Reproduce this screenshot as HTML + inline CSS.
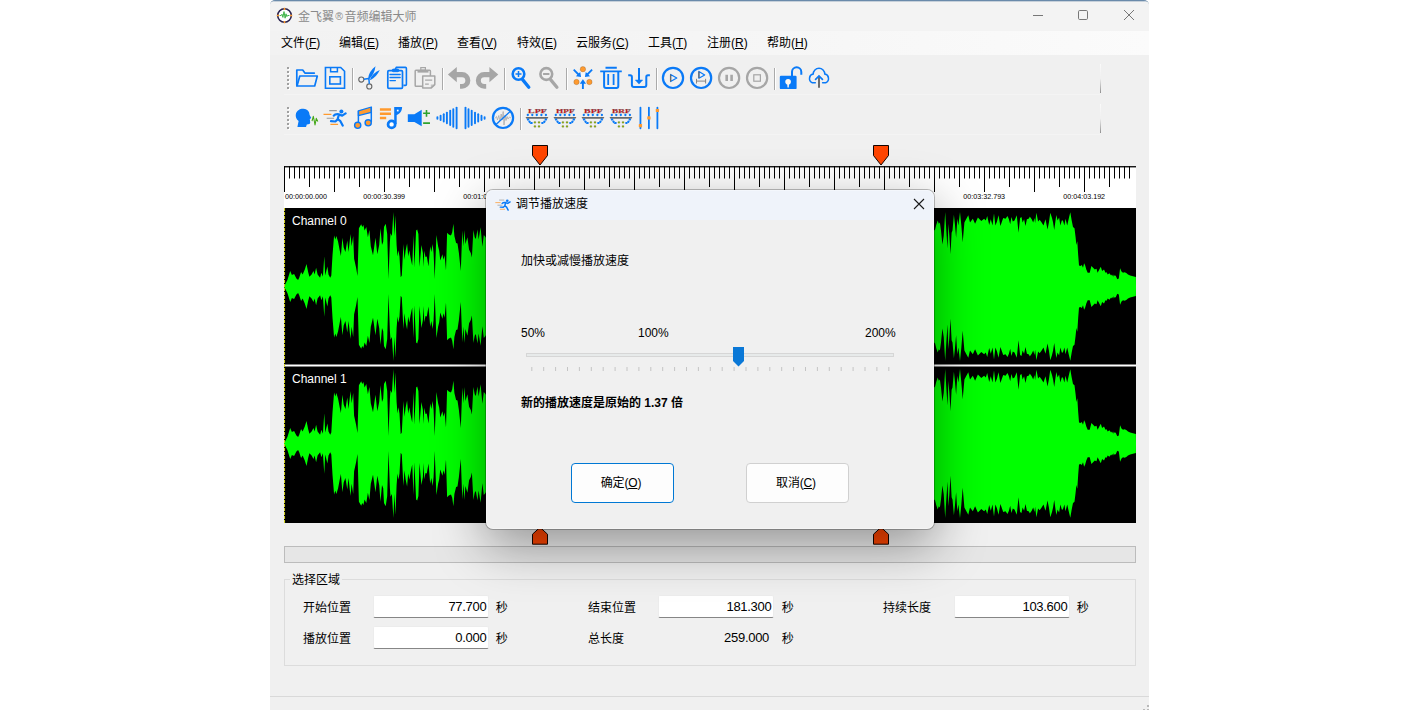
<!DOCTYPE html>
<html lang="zh-CN">
<head>
<meta charset="utf-8">
<title>金飞翼®音频编辑大师</title>
<style>
*{box-sizing:border-box;margin:0;padding:0}
html,body{width:1420px;height:710px;overflow:hidden;background:#fff}
body{position:relative;font-family:"Liberation Sans","Noto Sans CJK SC",sans-serif;font-size:12px;color:#000}
.abs{position:absolute}
#win{position:absolute;left:270px;top:0;width:879px;height:710px;background:#f0f0f0;overflow:hidden;border-top:1px solid #6a8aaa;border-radius:5px 5px 0 0}
#inner{position:absolute;left:0;top:1px;width:879px;height:708px;border-top:0}
#inner>*{position:absolute}
#hl{position:absolute;left:0;top:0;width:879px;height:1px;background:#c6d0da}
#titlebar{left:0;top:0;width:879px;height:29px;background:#f3f3f3}
#title{left:28px;top:6.5px;color:#8a8a8a;font-size:12px;line-height:16px;white-space:nowrap}
#menubar{left:0;top:29px;width:879px;height:24px;background:linear-gradient(to right,#f2f2f2 0%,#f4f4f4 40%,#fbfbfb 100%)}
.mi{position:absolute;top:4px;line-height:16px;font-size:12px;white-space:nowrap}
.t{position:absolute;white-space:nowrap;line-height:16px;font-size:12px}
u{text-decoration:underline;text-underline-offset:1px}
.inp{position:absolute;height:23px;width:116px;letter-spacing:-0.3px;background:#fff;border:1px solid #ececec;border-bottom:1px solid #868686;border-radius:2px;text-align:right;padding-right:1.6px;font-size:13px;line-height:21px}
.sep{position:absolute;width:1px;height:24px;background:#aaaaaa;box-shadow:1px 0 0 #fff}
.grip{position:absolute;width:2px;height:22px;background:repeating-linear-gradient(to bottom,#a0a0a0 0,#a0a0a0 2px,transparent 2px,transparent 4px)}
.grip2{position:absolute;width:2px;height:22px;background:repeating-linear-gradient(to bottom,#fff 0,#fff 2px,transparent 2px,transparent 4px)}
</style>
</head>
<body>
<div id="win"><div id="hl"></div><div id="inner">
  <div id="titlebar"></div>
  <svg class="abs" style="left:6px;top:5px" width="17" height="17" viewBox="0 0 17 17"><circle cx="8.5" cy="8.5" r="6.8" stroke="#2a2350" stroke-width="1.6" fill="#fff"/><path d="M8.5 0.8V3M8.5 14V16.2M0.8 8.5H3M14 8.5H16.2" stroke="#ff9a2e" stroke-width="1.5"/><path d="M3.6 8.5H5.2L6 7.2L6.9 10.4L8 4.6L9.1 11.2L10 6.8L10.9 9.6L11.6 8.5H13.4" stroke="#3fb54a" stroke-width="1" fill="none" stroke-linejoin="round"/></svg>

  <div id="title">金飞翼<span style="font-size:10.5px;margin:0 1.5px 0 1.3px;position:relative;top:-0.5px">®</span>音频编辑大师</div>
  <svg class="abs" style="left:762px;top:7px" width="104" height="14" viewBox="0 0 104 14"><path d="M1 6.5H11" stroke="#777" stroke-width="1"/><rect x="46.5" y="1.5" width="9" height="9" rx="1.2" stroke="#777" stroke-width="1" fill="none"/><path d="M92 1L102 11M102 1L92 11" stroke="#777" stroke-width="1" fill="none"/></svg>

  <div id="menubar">
    <span class="mi" style="left:11px">文件(<u>F</u>)</span>
    <span class="mi" style="left:69px">编辑(<u>E</u>)</span>
    <span class="mi" style="left:128px">播放(<u>P</u>)</span>
    <span class="mi" style="left:187px">查看(<u>V</u>)</span>
    <span class="mi" style="left:247px">特效(<u>E</u>)</span>
    <span class="mi" style="left:306px">云服务(<u>C</u>)</span>
    <span class="mi" style="left:378px">工具(<u>T</u>)</span>
    <span class="mi" style="left:437px">注册(<u>R</u>)</span>
    <span class="mi" style="left:497px">帮助(<u>H</u>)</span>
  </div>
  <div class="abs" style="left:14px;top:92px;width:816px;height:1px;background:#f4f4f4"></div>
  <div class="abs" style="left:14px;top:132px;width:816px;height:1px;background:#f4f4f4"></div>
  <div class="abs" style="left:830px;top:62px;width:1px;height:29px;background:linear-gradient(to bottom,rgba(255,255,255,.7) 0%,rgba(235,235,235,.2) 50%,#909090 100%)"></div>
  <div class="abs" style="left:830px;top:102px;width:1px;height:29px;background:linear-gradient(to bottom,rgba(255,255,255,.7) 0%,rgba(235,235,235,.2) 50%,#909090 100%)"></div>
  <div class="grip2" style="left:18px;top:66px"></div><div class="grip" style="left:17px;top:65px"></div><div class="grip2" style="left:18px;top:106px"></div><div class="grip" style="left:17px;top:105px"></div><svg class="abs" style="left:25px;top:64px" width="24" height="24" viewBox="0 0 24 24"><g transform="translate(-0.9 -0.2)"><path d="M2.7 19.8V4.2H8.6L10.8 7.3H20.2" stroke="#0a7af7" stroke-width="1.7" fill="none" stroke-linejoin="round" stroke-linecap="round"/><path d="M2.9 20.2L5.7 10.2H23.2L20.6 20.2Z" stroke="#0a7af7" stroke-width="1.7" fill="none" stroke-linejoin="round"/></g></svg><svg class="abs" style="left:53px;top:64px" width="24" height="24" viewBox="0 0 24 24"><path d="M2.45 1.45H17.7L21.55 5.3V22.3H2.45Z" stroke="#0a7af7" stroke-width="1.6" fill="none" stroke-linejoin="miter"/><path d="M7.6 1.6V5.7H14.4V1.6" stroke="#0a7af7" stroke-width="1.5" fill="none"/><rect x="6.8" y="10.8" width="10.6" height="7.2" stroke="#0a7af7" stroke-width="1.6" fill="none"/></svg><svg class="abs" style="left:87px;top:64px" width="24" height="24" viewBox="0 0 24 24"><circle cx="4.3" cy="13.5" r="2.55" stroke="#686868" stroke-width="1.15" fill="none"/><circle cx="12.3" cy="20.4" r="2.55" stroke="#686868" stroke-width="1.15" fill="none"/><path d="M6.9 13.2L11.6 12.6M12.3 17.8L11.9 12.6" stroke="#0a7af7" stroke-width="1.5" fill="none"/><path d="M10.9 13.2Q11.6 5.6 18.5 0.3Q17.6 8 12.2 13.2Z" fill="#0a7af7"/><path d="M13 13.6Q15.4 7.2 22.8 4Q19.8 10.6 13.6 14Z" fill="#0a7af7"/></svg><svg class="abs" style="left:115px;top:64px" width="24" height="24" viewBox="0 0 24 24"><path d="M10.2 3.2L11.4 1.4H20.4Q21.4 1.4 21.4 2.4V18.4Q21.4 19.4 20.4 19.4H18.4" stroke="#0a7af7" stroke-width="1.6" fill="none"/><rect x="2.8" y="4.6" width="14.7" height="17.7" rx="1.1" stroke="#0a7af7" stroke-width="1.7" fill="none"/><rect x="7.2" y="3.1" width="6.6" height="2.6" rx="1" stroke="#0a7af7" stroke-width="0.8" fill="#0a7af7"/><path d="M5 8.5H15.2M5 11.5H15.2M5 14.6H10.4" stroke="#0a7af7" stroke-width="1.3" stroke-linecap="round"/></svg><svg class="abs" style="left:143px;top:64px" width="24" height="24" viewBox="0 0 24 24"><rect x="2.2" y="4.2" width="15.2" height="16" rx="0.8" stroke="#a6a6a6" stroke-width="1.5" fill="none"/><rect x="7.8" y="1.6" width="4.6" height="2.6" stroke="#a6a6a6" stroke-width="1.2" fill="none"/><rect x="4.5" y="4.6" width="11" height="2" fill="#a6a6a6"/><path d="M9.7 9.9H21.8V18.6L18 22.1H9.7Z" fill="#f0f0f0" stroke="#a6a6a6" stroke-width="1.5" stroke-linejoin="round"/><path d="M21.6 18.4H17.8V22Z" fill="#a6a6a6" opacity=".6"/><path d="M12.1 14.1H19.2M12.1 18.1H15.8" stroke="#a6a6a6" stroke-width="1.2"/></svg><svg class="abs" style="left:177px;top:64px" width="24" height="24" viewBox="0 0 24 24"><path d="M0.9 8.5L9.8 1.1V6.1H15A8.35 8.35 0 0 1 15 22.8H13V17.9H15A3.35 3.35 0 0 0 15 11.2H9.8V16.2Z" fill="#a6a6a6"/></svg><svg class="abs" style="left:205px;top:64px" width="24" height="24" viewBox="0 0 24 24"><path d="M23.3 8.5L14.4 1.1V6.1H9.2A8.35 8.35 0 0 0 9.2 22.8H11.2V17.9H9.2A3.35 3.35 0 0 1 9.2 11.2H14.4V16.2Z" fill="#a6a6a6"/></svg><svg class="abs" style="left:239px;top:64px" width="24" height="24" viewBox="0 0 24 24"><circle cx="9.5" cy="8" r="5.8" stroke="#0a7af7" stroke-width="2.6" fill="none"/><path d="M13.6 13.6L19.8 21.2" stroke="#0a7af7" stroke-width="3.3" stroke-linecap="round"/><path d="M6.5 8H12.5M9.5 5V11" stroke="#0a7af7" stroke-width="1.5"/></svg><svg class="abs" style="left:267px;top:64px" width="24" height="24" viewBox="0 0 24 24"><circle cx="9.3" cy="8" r="5.9" stroke="#a6a6a6" stroke-width="2.6" fill="none"/><path d="M13.6 13.6L19.9 21.2" stroke="#a6a6a6" stroke-width="3.3" stroke-linecap="round"/><path d="M6.1 8H12.4" stroke="#a6a6a6" stroke-width="2"/></svg><svg class="abs" style="left:301px;top:64px" width="24" height="24" viewBox="0 0 24 24"><path d="M10.5 5.5L13.3 5.5L14.5 12L11.9 13.2L9.3 12Z" fill="#fff" opacity=".5"/><circle cx="11.9" cy="3.2" r="2.7" fill="#ff9a2e" stroke="#7a5a3a" stroke-width="0.3"/><circle cx="5.5" cy="16" r="2.7" fill="#ff9a2e" stroke="#7a5a3a" stroke-width="0.3"/><circle cx="18.4" cy="16" r="2.7" fill="#ff9a2e" stroke="#7a5a3a" stroke-width="0.3"/><path d="M11.9 23V16.5" stroke="#0a7af7" stroke-width="1.9"/><path d="M11.9 13.2L15 17.8H8.8Z" fill="#0a7af7"/><path d="M2.7 3.7L7.5 8.5M21.1 3.7L16.3 8.5" stroke="#0a7af7" stroke-width="1.8"/><path d="M10.1 11.1L4.9 10.2L9.2 5.9ZM13.9 11.1L19.1 10.2L14.8 5.9Z" fill="#0a7af7"/></svg><svg class="abs" style="left:329px;top:64px" width="24" height="24" viewBox="0 0 24 24"><path d="M6.5 1.7H17.8" stroke="#0a7af7" stroke-width="2"/><path d="M1.2 5.3H22.8" stroke="#0a7af7" stroke-width="1.7"/><path d="M5.1 5.6V20Q5.1 21.9 7 21.9H17.4Q19.3 21.9 19.3 20V5.6" stroke="#0a7af7" stroke-width="2" fill="none"/><path d="M9.2 8.1V19M14.6 8.1V19" stroke="#0a7af7" stroke-width="1.8"/></svg><svg class="abs" style="left:357px;top:64px" width="24" height="24" viewBox="0 0 24 24"><path d="M12 2.1V15" stroke="#0a7af7" stroke-width="2"/><path d="M8.3 14L12 18.1L15.7 14Z" fill="#0a7af7" stroke="#0a7af7" stroke-width="0.5" stroke-linejoin="round"/><path d="M1.2 9.2H3.2Q4.9 9.2 4.9 11V19Q4.9 21 6.9 21H17.3Q19.3 21 19.3 19V11Q19.3 9.2 21 9.2H22.9" stroke="#0a7af7" stroke-width="2" fill="none"/></svg><svg class="abs" style="left:391px;top:64px" width="24" height="24" viewBox="0 0 24 24"><circle cx="12" cy="11.9" r="10.1" stroke="#0a7af7" stroke-width="2.2" fill="none"/><path d="M9.6 8.4V15.6L15.8 12Z" stroke="#0a7af7" stroke-width="1.2" fill="none" stroke-linejoin="round"/><path d="M9.6 8.6V15.4" stroke="#6b6b6b" stroke-width="1.3"/></svg><svg class="abs" style="left:419px;top:64px" width="24" height="24" viewBox="0 0 24 24"><circle cx="12.1" cy="11.9" r="10.1" stroke="#0a7af7" stroke-width="2.2" fill="none"/><path d="M9.9 5.4V12.2L15.7 8.9Z" stroke="#0a7af7" stroke-width="1.2" fill="none" stroke-linejoin="round"/><path d="M9.9 5.6V12" stroke="#6b6b6b" stroke-width="1.3"/><path d="M7.5 12.8V17.5M16.6 12.8V17.5M7.5 15.1H16.6" stroke="#7a7a7a" stroke-width="0.9" fill="none"/></svg><svg class="abs" style="left:447px;top:64px" width="24" height="24" viewBox="0 0 24 24"><circle cx="12.1" cy="11.9" r="10.1" stroke="#a6a6a6" stroke-width="2.2" fill="none"/><path d="M9.7 8.8V15M14.6 8.8V15" stroke="#a6a6a6" stroke-width="2.6"/></svg><svg class="abs" style="left:475px;top:64px" width="24" height="24" viewBox="0 0 24 24"><circle cx="12.1" cy="11.9" r="10.1" stroke="#a6a6a6" stroke-width="2.2" fill="none"/><rect x="8.8" y="8.8" width="6.6" height="6.4" stroke="#a6a6a6" stroke-width="1.2" fill="none"/></svg><svg class="abs" style="left:509px;top:64px" width="24" height="24" viewBox="0 0 24 24"><path d="M13 10V6A4.65 4.65 0 0 1 22.3 6V8.8" stroke="#0a7af7" stroke-width="2" fill="none"/><rect x="0.8" y="9.8" width="16.8" height="13.3" rx="1.2" fill="#0a7af7"/><circle cx="9.1" cy="15.7" r="2.8" fill="#fff8f0"/><path d="M8.1 16L8.5 21.6H9.8L10.1 16Z" fill="#fff8f0"/></svg><svg class="abs" style="left:537px;top:64px" width="24" height="24" viewBox="0 0 24 24"><path d="M8.3 16.7H5.3A4.5 4.5 0 0 1 6.2 8.1A5.8 5.8 0 0 1 17.8 8.1A4.5 4.5 0 0 1 18.7 16.7H15.6" stroke="#0a7af7" stroke-width="1.5" fill="none" stroke-linecap="round"/><path d="M12 21.8V11" stroke="#666" stroke-width="1.9"/><path d="M8.1 13.8L12 9.9L15.9 13.8" stroke="#0a7af7" stroke-width="1.7" fill="none"/></svg><div class="sep" style="left:82px;top:66px;height:22px"></div><div class="sep" style="left:172px;top:66px;height:22px"></div><div class="sep" style="left:234px;top:66px;height:22px"></div><div class="sep" style="left:296px;top:66px;height:22px"></div><div class="sep" style="left:386px;top:66px;height:22px"></div><div class="sep" style="left:504px;top:66px;height:22px"></div><svg class="abs" style="left:25px;top:104px" width="24" height="24" viewBox="0 0 24 24"><path d="M2.4 20.9L3.6 15C1 13 0.5 10.5 0.8 8.5C1.5 4.5 5 2.6 8.5 2.8C12.2 3 14.5 5.5 14.6 9L16.3 12L14.8 13L15.2 16.5C15.2 18 14 18.4 11.8 18.4L11 20.9Z" fill="#0a7af7"/><path d="M17 15.2L18.3 10.4L19.4 15.5L20 19L21.3 12.4L22.8 15.6" stroke="#44a818" stroke-width="1.1" fill="none" stroke-linejoin="round"/></svg><svg class="abs" style="left:53px;top:104px" width="24" height="24" viewBox="0 0 24 24"><path d="M6.2 4.6H13.8M3.7 12.3H11.1" stroke="#9a9a9a" stroke-width="1.1"/><path d="M0.5 8.4H8.4M7.4 18.4H15.1" stroke="#ff9a2e" stroke-width="1.1"/><circle cx="18.4" cy="5.6" r="2" fill="#0a7af7"/><path d="M10.8 9.6C12 8 13.5 7.9 16 8.3L14.6 13.4M16.3 8.6L19.2 9.6L22.6 7.4M14.6 13.4L12.4 15.5L8 15.2M14.8 13.2L17.4 15.2L19.7 19.6" stroke="#0a7af7" stroke-width="2.2" stroke-linecap="round" stroke-linejoin="round" fill="none"/></svg><svg class="abs" style="left:81px;top:104px" width="24" height="24" viewBox="0 0 24 24"><path d="M7.4 4.8L20.3 1V6.4L7.4 9.6Z" fill="#ff9a2e" stroke="#0a7af7" stroke-width="1.3" stroke-linejoin="round"/><path d="M7.4 4.8V18M20.3 1V16" stroke="#0a7af7" stroke-width="1.5"/><circle cx="6.7" cy="19.3" r="3.1" fill="#ff9a2e" stroke="#0a7af7" stroke-width="1.4"/><circle cx="17.2" cy="16.8" r="3.1" fill="#ff9a2e" stroke="#0a7af7" stroke-width="1.4"/></svg><svg class="abs" style="left:109px;top:104px" width="24" height="24" viewBox="0 0 24 24"><path d="M0.9 3.5H12M0.9 7.8H12M0.9 11.9H7.2" stroke="#ff9a2e" stroke-width="2.5"/><path d="M15.2 1H23.1C23.1 5 21 8 17.7 8.9V18H15.2Z" fill="#0a7af7"/><rect x="17.9" y="3.7" width="1.7" height="1.7" fill="#fff"/><circle cx="12.6" cy="18.4" r="3.55" stroke="#0a7af7" stroke-width="2.7" fill="#fff"/></svg><svg class="abs" style="left:137px;top:104px" width="24" height="24" viewBox="0 0 24 24"><path d="M0.8 8.3H7.4L14.7 3.8V20.3L7.4 15.9H0.8Z" fill="#0a7af7"/><path d="M16.1 7.3H23M19.5 3.9V10.7M16.1 17.1H23" stroke="#2ea32e" stroke-width="1.6"/></svg><svg class="abs" style="left:165px;top:104px" width="24" height="24" viewBox="0 0 24 24"><path d="M2.4 11.1V12.7" stroke="#0a7af7" stroke-width="1.9" stroke-linecap="round"/><path d="M5.6 9.8V14.0" stroke="#0a7af7" stroke-width="1.9" stroke-linecap="round"/><path d="M8.75 8.2V15.6" stroke="#0a7af7" stroke-width="1.9" stroke-linecap="round"/><path d="M11.9 6.6V17.2" stroke="#0a7af7" stroke-width="1.9" stroke-linecap="round"/><path d="M15.2 4.7V19.1" stroke="#0a7af7" stroke-width="1.9" stroke-linecap="round"/><path d="M18.3 3.1V20.7" stroke="#0a7af7" stroke-width="1.9" stroke-linecap="round"/><path d="M21.6 1.6V22.2" stroke="#0a7af7" stroke-width="1.9" stroke-linecap="round"/></svg><svg class="abs" style="left:193px;top:104px" width="24" height="24" viewBox="0 0 24 24"><path d="M2.5 1.6V22.2" stroke="#0a7af7" stroke-width="1.9" stroke-linecap="round"/><path d="M5.5 3.1V20.7" stroke="#0a7af7" stroke-width="1.9" stroke-linecap="round"/><path d="M8.7 4.7V19.1" stroke="#0a7af7" stroke-width="1.9" stroke-linecap="round"/><path d="M12 6.6V17.2" stroke="#0a7af7" stroke-width="1.9" stroke-linecap="round"/><path d="M15.2 8.2V15.6" stroke="#0a7af7" stroke-width="1.9" stroke-linecap="round"/><path d="M18.5 9.8V14.0" stroke="#0a7af7" stroke-width="1.9" stroke-linecap="round"/><path d="M21.6 11.1V12.7" stroke="#0a7af7" stroke-width="1.9" stroke-linecap="round"/></svg><svg class="abs" style="left:221px;top:104px" width="24" height="24" viewBox="0 0 24 24"><path d="M4 12.5L5.5 10.5L6.5 14L7.8 9.5L9 15L10.2 8L11.2 14L12.2 5.5L13 19L14 9L15 14.5L16 10.5L17 13L18.5 11L20 12" stroke="#a4a4a4" stroke-width="0.7" fill="none" stroke-linejoin="round"/><circle cx="12" cy="11.9" r="10.1" stroke="#0a7af7" stroke-width="2.2" fill="none"/><path d="M5 18.6L19.4 5.2" stroke="#0a7af7" stroke-width="1.3"/></svg><svg class="abs" style="left:255px;top:104px" width="24" height="24" viewBox="0 0 24 24"><text x="12.4" y="7.1" text-anchor="middle" font-family="Liberation Serif, serif" font-weight="bold" font-size="6.2" textLength="18.6" lengthAdjust="spacingAndGlyphs" fill="#e8000a" stroke="#6a6a6a" stroke-width="0.25">LPF</text><circle cx="2.8" cy="9" r="1.15" fill="#0a7af7"/><circle cx="7.3" cy="9" r="1.15" fill="#0a7af7"/><circle cx="11.8" cy="9" r="1.15" fill="#0a7af7"/><circle cx="16.4" cy="9" r="1.15" fill="#0a7af7"/><circle cx="20.9" cy="9" r="1.15" fill="#0a7af7"/><path d="M0.5 10.9H23.4L22.4 12.8H1.5Z" fill="#6a6a6a"/><path d="M2.5 12.6L5.5 17.1H8M21.4 12.6L18.5 17.1H16" stroke="#0a7af7" stroke-width="2" stroke-dasharray="2.1 0.6" fill="none"/><rect x="8.9" y="15.5" width="2" height="1.7" rx="0.4" fill="#8cb400" stroke="#7a7a7a" stroke-width="0.3"/><rect x="8.9" y="19.6" width="2" height="1.7" rx="0.4" fill="#8cb400" stroke="#7a7a7a" stroke-width="0.3"/><rect x="13.0" y="15.5" width="2" height="1.7" rx="0.4" fill="#8cb400" stroke="#7a7a7a" stroke-width="0.3"/><rect x="13.0" y="19.6" width="2" height="1.7" rx="0.4" fill="#8cb400" stroke="#7a7a7a" stroke-width="0.3"/></svg><svg class="abs" style="left:283px;top:104px" width="24" height="24" viewBox="0 0 24 24"><text x="12.4" y="7.1" text-anchor="middle" font-family="Liberation Serif, serif" font-weight="bold" font-size="6.2" textLength="18.6" lengthAdjust="spacingAndGlyphs" fill="#e8000a" stroke="#6a6a6a" stroke-width="0.25">HPF</text><circle cx="2.8" cy="9" r="1.15" fill="#0a7af7"/><circle cx="7.3" cy="9" r="1.15" fill="#0a7af7"/><circle cx="11.8" cy="9" r="1.15" fill="#0a7af7"/><circle cx="16.4" cy="9" r="1.15" fill="#0a7af7"/><circle cx="20.9" cy="9" r="1.15" fill="#0a7af7"/><path d="M0.5 10.9H23.4L22.4 12.8H1.5Z" fill="#6a6a6a"/><path d="M2.5 12.6L5.5 17.1H8M21.4 12.6L18.5 17.1H16" stroke="#0a7af7" stroke-width="2" stroke-dasharray="2.1 0.6" fill="none"/><rect x="8.9" y="15.5" width="2" height="1.7" rx="0.4" fill="#8cb400" stroke="#7a7a7a" stroke-width="0.3"/><rect x="8.9" y="19.6" width="2" height="1.7" rx="0.4" fill="#8cb400" stroke="#7a7a7a" stroke-width="0.3"/><rect x="13.0" y="15.5" width="2" height="1.7" rx="0.4" fill="#8cb400" stroke="#7a7a7a" stroke-width="0.3"/><rect x="13.0" y="19.6" width="2" height="1.7" rx="0.4" fill="#8cb400" stroke="#7a7a7a" stroke-width="0.3"/></svg><svg class="abs" style="left:311px;top:104px" width="24" height="24" viewBox="0 0 24 24"><text x="12.4" y="7.1" text-anchor="middle" font-family="Liberation Serif, serif" font-weight="bold" font-size="6.2" textLength="18.6" lengthAdjust="spacingAndGlyphs" fill="#e8000a" stroke="#6a6a6a" stroke-width="0.25">BPF</text><circle cx="2.8" cy="9" r="1.15" fill="#0a7af7"/><circle cx="7.3" cy="9" r="1.15" fill="#0a7af7"/><circle cx="11.8" cy="9" r="1.15" fill="#0a7af7"/><circle cx="16.4" cy="9" r="1.15" fill="#0a7af7"/><circle cx="20.9" cy="9" r="1.15" fill="#0a7af7"/><path d="M0.5 10.9H23.4L22.4 12.8H1.5Z" fill="#6a6a6a"/><path d="M2.5 12.6L5.5 17.1H8M21.4 12.6L18.5 17.1H16" stroke="#0a7af7" stroke-width="2" stroke-dasharray="2.1 0.6" fill="none"/><rect x="8.9" y="15.5" width="2" height="1.7" rx="0.4" fill="#8cb400" stroke="#7a7a7a" stroke-width="0.3"/><rect x="8.9" y="19.6" width="2" height="1.7" rx="0.4" fill="#8cb400" stroke="#7a7a7a" stroke-width="0.3"/><rect x="13.0" y="15.5" width="2" height="1.7" rx="0.4" fill="#8cb400" stroke="#7a7a7a" stroke-width="0.3"/><rect x="13.0" y="19.6" width="2" height="1.7" rx="0.4" fill="#8cb400" stroke="#7a7a7a" stroke-width="0.3"/></svg><svg class="abs" style="left:339px;top:104px" width="24" height="24" viewBox="0 0 24 24"><text x="12.4" y="7.1" text-anchor="middle" font-family="Liberation Serif, serif" font-weight="bold" font-size="6.2" textLength="18.6" lengthAdjust="spacingAndGlyphs" fill="#e8000a" stroke="#6a6a6a" stroke-width="0.25">BRF</text><circle cx="2.8" cy="9" r="1.15" fill="#0a7af7"/><circle cx="7.3" cy="9" r="1.15" fill="#0a7af7"/><circle cx="11.8" cy="9" r="1.15" fill="#0a7af7"/><circle cx="16.4" cy="9" r="1.15" fill="#0a7af7"/><circle cx="20.9" cy="9" r="1.15" fill="#0a7af7"/><path d="M0.5 10.9H23.4L22.4 12.8H1.5Z" fill="#6a6a6a"/><path d="M2.5 12.6L5.5 17.1H8M21.4 12.6L18.5 17.1H16" stroke="#0a7af7" stroke-width="2" stroke-dasharray="2.1 0.6" fill="none"/><rect x="8.9" y="15.5" width="2" height="1.7" rx="0.4" fill="#8cb400" stroke="#7a7a7a" stroke-width="0.3"/><rect x="8.9" y="19.6" width="2" height="1.7" rx="0.4" fill="#8cb400" stroke="#7a7a7a" stroke-width="0.3"/><rect x="13.0" y="15.5" width="2" height="1.7" rx="0.4" fill="#8cb400" stroke="#7a7a7a" stroke-width="0.3"/><rect x="13.0" y="19.6" width="2" height="1.7" rx="0.4" fill="#8cb400" stroke="#7a7a7a" stroke-width="0.3"/></svg><svg class="abs" style="left:367px;top:104px" width="24" height="24" viewBox="0 0 24 24"><path d="M3.45 1.6V22.3M11.9 1.6V22.3M20.4 1.6V22.3" stroke="#0a7af7" stroke-width="1.8" stroke-linecap="round"/><rect x="1.8" y="18.1" width="3.3" height="3.2" rx="0.6" fill="#ff9a2e"/><rect x="10.25" y="10.3" width="3.3" height="3.2" rx="0.6" fill="#ff9a2e"/><rect x="18.75" y="2.9" width="3.3" height="3.2" rx="0.6" fill="#ff9a2e"/></svg><div class="sep" style="left:250px;top:106px;height:22px"></div>
  <svg class="abs" style="left:14px;top:163px" width="852" height="43" viewBox="0 0 852 43"><rect y="1.2" width="852" height="41.8" fill="#fff"/><rect x="0" y="1.1" width="852" height="1.3" fill="#000"/><path d="M0.5 1.2V27M5.5 1.2V13.5M10.5 1.2V13.5M15.5 1.2V13.5M20.5 1.2V13.5M25.5 1.2V22M30.5 1.2V13.5M35.5 1.2V13.5M40.5 1.2V13.5M45.5 1.2V13.5M50.5 1.2V27M55.5 1.2V13.5M60.5 1.2V13.5M65.5 1.2V13.5M70.5 1.2V13.5M75.5 1.2V22M80.5 1.2V13.5M85.5 1.2V13.5M90.5 1.2V13.5M95.5 1.2V13.5M100.5 1.2V27M105.5 1.2V13.5M110.5 1.2V13.5M115.5 1.2V13.5M120.5 1.2V13.5M125.5 1.2V22M130.5 1.2V13.5M135.5 1.2V13.5M140.5 1.2V13.5M145.5 1.2V13.5M150.5 1.2V27M155.5 1.2V13.5M160.5 1.2V13.5M165.5 1.2V13.5M170.5 1.2V13.5M175.5 1.2V22M180.5 1.2V13.5M185.5 1.2V13.5M190.5 1.2V13.5M195.5 1.2V13.5M200.5 1.2V27M205.5 1.2V13.5M210.5 1.2V13.5M215.5 1.2V13.5M220.5 1.2V13.5M225.5 1.2V22M230.5 1.2V13.5M235.5 1.2V13.5M240.5 1.2V13.5M245.5 1.2V13.5M250.5 1.2V27M255.5 1.2V13.5M260.5 1.2V13.5M265.5 1.2V13.5M270.5 1.2V13.5M275.5 1.2V22M280.5 1.2V13.5M285.5 1.2V13.5M290.5 1.2V13.5M295.5 1.2V13.5M300.5 1.2V27M305.5 1.2V13.5M310.5 1.2V13.5M315.5 1.2V13.5M320.5 1.2V13.5M325.5 1.2V22M330.5 1.2V13.5M335.5 1.2V13.5M340.5 1.2V13.5M345.5 1.2V13.5M350.5 1.2V27M355.5 1.2V13.5M360.5 1.2V13.5M365.5 1.2V13.5M370.5 1.2V13.5M375.5 1.2V22M380.5 1.2V13.5M385.5 1.2V13.5M390.5 1.2V13.5M395.5 1.2V13.5M400.5 1.2V27M405.5 1.2V13.5M410.5 1.2V13.5M415.5 1.2V13.5M420.5 1.2V13.5M425.5 1.2V22M430.5 1.2V13.5M435.5 1.2V13.5M440.5 1.2V13.5M445.5 1.2V13.5M450.5 1.2V27M455.5 1.2V13.5M460.5 1.2V13.5M465.5 1.2V13.5M470.5 1.2V13.5M475.5 1.2V22M480.5 1.2V13.5M485.5 1.2V13.5M490.5 1.2V13.5M495.5 1.2V13.5M500.5 1.2V27M505.5 1.2V13.5M510.5 1.2V13.5M515.5 1.2V13.5M520.5 1.2V13.5M525.5 1.2V22M530.5 1.2V13.5M535.5 1.2V13.5M540.5 1.2V13.5M545.5 1.2V13.5M550.5 1.2V27M555.5 1.2V13.5M560.5 1.2V13.5M565.5 1.2V13.5M570.5 1.2V13.5M575.5 1.2V22M580.5 1.2V13.5M585.5 1.2V13.5M590.5 1.2V13.5M595.5 1.2V13.5M600.5 1.2V27M605.5 1.2V13.5M610.5 1.2V13.5M615.5 1.2V13.5M620.5 1.2V13.5M625.5 1.2V22M630.5 1.2V13.5M635.5 1.2V13.5M640.5 1.2V13.5M645.5 1.2V13.5M650.5 1.2V27M655.5 1.2V13.5M660.5 1.2V13.5M665.5 1.2V13.5M670.5 1.2V13.5M675.5 1.2V22M680.5 1.2V13.5M685.5 1.2V13.5M690.5 1.2V13.5M695.5 1.2V13.5M700.5 1.2V27M705.5 1.2V13.5M710.5 1.2V13.5M715.5 1.2V13.5M720.5 1.2V13.5M725.5 1.2V22M730.5 1.2V13.5M735.5 1.2V13.5M740.5 1.2V13.5M745.5 1.2V13.5M750.5 1.2V27M755.5 1.2V13.5M760.5 1.2V13.5M765.5 1.2V13.5M770.5 1.2V13.5M775.5 1.2V22M780.5 1.2V13.5M785.5 1.2V13.5M790.5 1.2V13.5M795.5 1.2V13.5M800.5 1.2V27M805.5 1.2V13.5M810.5 1.2V13.5M815.5 1.2V13.5M820.5 1.2V13.5M825.5 1.2V22M830.5 1.2V13.5M835.5 1.2V13.5M840.5 1.2V13.5M845.5 1.2V13.5" stroke="#000" stroke-width="1" fill="none"/><text x="1.1" y="33.9" textLength="41.8" lengthAdjust="spacingAndGlyphs" font-family="Liberation Sans, sans-serif" font-size="7.8" fill="#000">00:00:00.000</text><text x="79.3" y="33.9" textLength="41.8" lengthAdjust="spacingAndGlyphs" font-family="Liberation Sans, sans-serif" font-size="7.8" fill="#000">00:00:30.399</text><text x="179.3" y="33.9" textLength="41.8" lengthAdjust="spacingAndGlyphs" font-family="Liberation Sans, sans-serif" font-size="7.8" fill="#000">00:01:00.799</text><text x="279.3" y="33.9" textLength="41.8" lengthAdjust="spacingAndGlyphs" font-family="Liberation Sans, sans-serif" font-size="7.8" fill="#000">00:01:31.198</text><text x="379.3" y="33.9" textLength="41.8" lengthAdjust="spacingAndGlyphs" font-family="Liberation Sans, sans-serif" font-size="7.8" fill="#000">00:02:01.598</text><text x="479.3" y="33.9" textLength="41.8" lengthAdjust="spacingAndGlyphs" font-family="Liberation Sans, sans-serif" font-size="7.8" fill="#000">00:02:31.997</text><text x="579.3" y="33.9" textLength="41.8" lengthAdjust="spacingAndGlyphs" font-family="Liberation Sans, sans-serif" font-size="7.8" fill="#000">00:03:02.396</text><text x="679.3" y="33.9" textLength="41.8" lengthAdjust="spacingAndGlyphs" font-family="Liberation Sans, sans-serif" font-size="7.8" fill="#000">00:03:32.793</text><text x="779.3" y="33.9" textLength="41.8" lengthAdjust="spacingAndGlyphs" font-family="Liberation Sans, sans-serif" font-size="7.8" fill="#000">00:04:03.192</text></svg>
  <svg class="abs" style="left:14px;top:206px" width="852" height="315" viewBox="0 0 852 315"><rect width="852" height="315" fill="#000"/><path d="M0 78.5 L0.0 77.9 L1.1 76.6 L3.4 72.1 L6.2 63.1 L7.9 67.0 L10.1 65.9 L12.4 70.4 L14.1 72.1 L15.2 69.8 L17.1 64.0 L18.6 66.4 L20.8 61.4 L22.5 56.0 L24.2 64.2 L25.4 68.7 L27.6 66.4 L29.5 63.1 L30.6 66.4 L32.1 59.7 L33.6 66.4 L36.1 69.8 L37.4 64.8 L38.9 68.7 L40.3 48.2 L41.2 67.6 L43.4 58.6 L44.5 66.4 L46.2 69.8 L47.3 67.6 L48.5 47.3 L50.1 27.6 L51.3 31.5 L52.4 28.1 L54.1 33.8 L55.8 42.8 L56.9 47.9 L58.4 29.8 L59.7 39.4 L61.4 43.9 L63.3 32.6 L64.5 43.9 L66.5 26.1 L67.6 38.3 L69.2 28.1 L70.1 50.7 L72.1 59.7 L73.5 68.1 L74.9 20.2 L77.2 16.3 L78.3 19.1 L79.4 16.9 L80.6 22.5 L82.3 18.9 L83.9 29.3 L85.4 21.9 L86.8 38.3 L89.0 47.3 L91.5 29.8 L93.3 46.2 L95.2 37.1 L96.5 20.2 L98.0 37.1 L99.2 33.8 L100.0 19.1 L101.7 15.7 L103.2 25.9 L104.5 71.0 L105.9 33.8 L106.5 25.3 L107.9 28.1 L109.4 3.9 L110.4 28.1 L111.5 7.3 L112.6 37.1 L113.5 48.4 L114.4 42.2 L115.5 48.4 L116.7 69.3 L117.8 67.6 L119.4 36.0 L120.5 51.8 L121.6 42.8 L123.1 35.5 L124.2 48.4 L125.4 42.2 L126.5 49.5 L128.2 57.4 L129.5 27.0 L130.4 59.7 L132.1 22.5 L133.2 21.4 L134.4 25.9 L135.5 59.1 L137.4 37.1 L138.9 45.0 L139.4 59.1 L140.3 42.8 L141.5 49.0 L142.8 48.4 L144.5 58.6 L146.2 38.3 L147.3 43.9 L148.7 36.0 L149.6 45.0 L150.7 71.0 L152.4 27.0 L154.1 38.3 L155.2 42.8 L156.3 52.4 L158.4 46.2 L159.5 51.8 L160.6 47.3 L162.0 62.5 L163.1 24.8 L164.8 26.4 L167.0 27.6 L168.2 24.2 L169.4 15.7 L170.4 28.1 L172.1 34.9 L173.5 35.5 L174.9 45.0 L176.8 63.1 L178.3 22.5 L179.4 38.3 L180.5 21.9 L181.4 36.0 L183.4 29.3 L185.1 41.7 L186.8 45.0 L187.9 49.5 L189.4 21.9 L190.7 29.3 L191.8 31.0 L193.5 21.4 L194.6 31.5 L196.6 19.3 L198.4 38.8 L199.8 27.0 L201.7 29.3 L203.1 33.8 L208.0 27.0 L210.9 34.8 L213.4 16.7 L216.7 39.7 L218.6 42.0 L221.0 42.6 L223.4 24.0 L225.5 23.2 L228.2 42.8 L230.8 35.7 L233.1 35.0 L236.0 30.3 L237.8 27.2 L240.9 34.3 L242.8 31.9 L246.2 14.2 L249.0 16.4 L252.2 32.2 L253.9 23.9 L256.5 32.7 L258.5 31.3 L260.9 35.4 L263.0 29.8 L266.2 25.9 L268.3 35.2 L270.7 37.3 L272.6 28.1 L274.3 29.0 L276.5 22.3 L279.5 22.8 L282.4 32.3 L285.2 33.3 L287.9 33.7 L290.3 41.7 L292.2 14.4 L294.2 22.8 L297.0 21.8 L299.5 25.6 L301.1 41.3 L303.0 38.9 L304.7 39.6 L307.3 37.9 L310.7 23.1 L313.3 22.3 L315.3 15.7 L318.5 21.7 L320.9 18.2 L323.9 23.7 L327.3 24.5 L329.5 26.9 L331.4 37.7 L334.3 20.0 L337.8 18.0 L340.4 40.8 L342.8 15.7 L345.9 28.9 L348.3 37.0 L350.2 41.3 L353.5 24.3 L355.3 31.1 L356.9 37.2 L359.8 24.0 L362.3 35.3 L365.1 14.8 L367.5 41.4 L369.1 41.0 L372.5 27.3 L375.7 38.4 L377.7 22.7 L381.0 33.3 L382.6 17.6 L384.7 21.3 L386.5 22.7 L389.7 21.7 L391.9 21.7 L393.7 34.1 L396.0 17.2 L397.8 17.1 L400.9 14.4 L403.2 37.4 L405.1 18.7 L408.6 22.5 L411.0 34.9 L414.2 17.3 L415.9 37.0 L419.1 18.1 L421.2 35.1 L423.5 27.3 L425.2 18.4 L427.8 20.3 L429.8 14.5 L432.8 33.2 L436.2 22.5 L439.3 42.1 L441.0 21.2 L443.1 28.0 L444.9 14.2 L447.4 18.6 L449.0 29.1 L450.7 17.0 L453.0 41.4 L454.7 27.3 L456.4 38.0 L458.7 28.6 L461.4 24.9 L463.6 24.9 L465.5 35.2 L468.5 38.9 L470.5 36.2 L473.0 43.5 L474.5 29.7 L476.3 23.1 L479.4 26.2 L482.3 31.8 L483.9 30.3 L486.2 25.6 L487.9 36.7 L491.1 35.6 L493.4 15.4 L495.4 39.1 L498.3 26.5 L501.1 42.2 L503.4 43.4 L505.4 22.3 L507.0 34.7 L510.5 14.4 L512.9 21.4 L515.7 29.5 L518.9 38.3 L522.1 42.2 L525.3 23.2 L527.7 23.4 L530.1 20.1 L531.9 28.3 L535.1 15.7 L537.0 35.9 L540.3 33.1 L542.0 22.1 L544.3 21.4 L546.7 28.5 L549.1 34.8 L552.4 23.4 L555.5 16.6 L557.5 15.9 L560.7 28.3 L563.3 40.1 L566.3 38.3 L568.9 39.7 L570.6 25.2 L573.0 23.3 L576.1 14.0 L577.8 24.6 L580.4 24.0 L583.0 26.8 L586.3 29.9 L588.8 22.8 L590.5 30.5 L592.2 39.4 L593.7 37.2 L595.7 28.0 L598.3 18.8 L600.8 16.8 L603.1 21.2 L605.7 24.8 L607.7 15.4 L610.7 39.1 L613.3 13.6 L614.9 34.4 L617.9 42.3 L620.9 26.3 L623.9 27.0 L627.2 33.1 L629.9 42.0 L632.5 30.9 L636.0 15.1 L637.7 42.3 L639.5 37.7 L642.4 27.2 L646.0 20.2 L648.3 18.0 L650.2 22.5 L651.1 21.4 L652.2 16.9 L653.7 12.4 L654.8 15.7 L655.9 14.6 L657.0 22.5 L658.4 36.6 L659.7 28.1 L661.2 3.9 L662.3 22.5 L663.5 40.5 L664.4 15.7 L665.4 28.1 L666.5 46.2 L667.6 24.8 L668.5 22.5 L669.9 6.7 L671.0 16.9 L672.1 29.8 L673.3 10.7 L674.4 17.4 L676.0 3.9 L677.3 16.9 L678.7 34.3 L680.4 14.6 L682.1 11.2 L684.3 7.3 L686.0 14.6 L688.8 10.7 L691.1 15.7 L693.9 9.5 L697.3 12.9 L700.1 10.7 L701.8 12.4 L703.2 7.9 L705.2 16.9 L706.8 11.2 L708.5 17.4 L710.0 5.6 L711.4 17.4 L713.0 13.5 L714.5 7.3 L716.4 18.0 L719.2 10.1 L721.5 10.7 L723.5 7.9 L724.9 11.2 L726.2 16.3 L727.4 9.0 L728.8 13.5 L730.5 12.4 L732.8 7.3 L734.5 24.8 L736.1 10.1 L737.5 9.0 L738.6 14.6 L740.1 11.2 L741.5 18.0 L742.9 11.2 L744.6 10.7 L746.0 8.4 L746.1 9.0 L747.7 11.2 L749.2 14.6 L750.5 10.1 L751.1 15.2 L752.4 4.7 L754.1 13.5 L755.6 11.8 L757.3 14.0 L759.5 17.4 L761.5 11.2 L763.5 21.4 L764.9 14.6 L766.3 4.7 L768.0 10.1 L769.1 14.6 L770.2 21.9 L772.3 7.0 L773.6 12.4 L775.1 9.5 L776.4 17.4 L777.8 12.4 L778.9 12.4 L780.4 17.4 L781.5 10.7 L783.2 17.4 L784.9 10.1 L786.3 4.2 L787.7 12.4 L789.0 19.1 L790.5 20.2 L791.6 29.3 L792.4 37.1 L793.3 33.2 L794.2 47.3 L795.0 57.4 L796.5 58.0 L797.8 56.9 L799.0 59.7 L800.1 55.2 L801.2 57.4 L802.3 61.4 L803.7 64.8 L805.7 64.8 L807.4 58.0 L809.1 59.7 L810.8 61.4 L812.5 60.8 L813.6 64.8 L815.3 61.4 L816.8 58.8 L818.1 63.1 L820.0 61.4 L821.5 64.8 L822.6 64.2 L823.7 66.4 L825.4 65.3 L827.1 67.6 L828.0 66.4 L829.2 68.7 L829.9 66.4 L830.7 68.1 L831.6 67.6 L833.3 71.2 L834.8 70.4 L836.1 60.2 L837.5 63.6 L839.0 64.8 L840.6 64.2 L842.3 65.1 L844.0 66.4 L846.1 67.6 L851.9 68.9 L852 78.5 L851.9 88.1 L846.1 89.4 L844.0 90.6 L842.3 91.9 L840.6 92.8 L839.0 92.2 L837.5 93.4 L836.1 96.8 L834.8 86.6 L833.3 85.8 L831.6 89.4 L830.7 88.9 L829.9 90.6 L829.2 88.3 L828.0 90.6 L827.1 89.4 L825.4 91.7 L823.7 90.6 L822.6 92.8 L821.5 92.2 L820.0 95.6 L818.1 93.9 L816.8 98.2 L815.3 95.6 L813.6 92.2 L812.5 96.2 L810.8 95.6 L809.1 97.3 L807.4 99.0 L805.7 92.2 L803.7 92.2 L802.3 95.6 L801.2 99.6 L800.1 101.8 L799.0 97.3 L797.8 100.1 L796.5 99.0 L795.0 99.6 L794.2 109.7 L793.3 123.8 L792.4 119.9 L791.6 127.7 L790.5 136.8 L789.0 137.9 L787.7 144.6 L786.3 152.8 L784.9 146.9 L783.2 139.6 L781.5 146.3 L780.4 139.6 L778.9 144.6 L777.8 144.6 L776.4 139.6 L775.1 147.5 L773.6 144.6 L772.3 150.0 L770.2 135.1 L769.1 142.4 L768.0 146.9 L766.3 152.3 L764.9 142.4 L763.5 135.6 L761.5 145.8 L759.5 139.6 L757.3 143.0 L755.6 145.2 L754.1 143.5 L752.4 152.3 L751.1 141.8 L750.5 146.9 L749.2 142.4 L747.7 145.8 L746.1 148.0 L746.0 148.6 L744.6 146.3 L742.9 145.8 L741.5 139.0 L740.1 145.8 L738.6 142.4 L737.5 148.0 L736.1 146.9 L734.5 132.2 L732.8 149.7 L730.5 144.6 L728.8 143.5 L727.4 148.0 L726.2 140.7 L724.9 145.8 L723.5 149.1 L721.5 146.3 L719.2 146.9 L716.4 139.0 L714.5 149.7 L713.0 143.5 L711.4 139.6 L710.0 151.4 L708.5 139.6 L706.8 145.8 L705.2 140.1 L703.2 149.1 L701.8 144.6 L700.1 146.3 L697.3 144.1 L693.9 147.5 L691.1 141.3 L688.8 146.3 L686.0 142.4 L684.3 149.7 L682.1 145.8 L680.4 142.4 L678.7 122.7 L677.3 140.1 L676.0 153.1 L674.4 139.6 L673.3 146.3 L672.1 127.2 L671.0 140.1 L669.9 150.3 L668.5 134.5 L667.6 132.2 L666.5 110.8 L665.4 128.9 L664.4 141.3 L663.5 116.5 L662.3 134.5 L661.2 153.1 L659.7 128.9 L658.4 120.4 L657.0 134.5 L655.9 142.4 L654.8 141.3 L653.7 144.6 L652.2 140.1 L651.1 135.6 L650.2 134.5 L648.3 139.0 L646.0 136.8 L642.4 129.8 L639.5 119.3 L637.7 114.7 L636.0 141.9 L632.5 126.1 L629.9 115.0 L627.2 123.9 L623.9 130.0 L620.9 130.7 L617.9 114.7 L614.9 122.6 L613.3 143.4 L610.7 117.9 L607.7 141.6 L605.7 132.2 L603.1 135.8 L600.8 140.2 L598.3 138.2 L595.7 129.0 L593.7 119.8 L592.2 117.6 L590.5 126.5 L588.8 134.2 L586.3 127.1 L583.0 130.2 L580.4 133.0 L577.8 132.4 L576.1 143.0 L573.0 133.7 L570.6 131.8 L568.9 117.3 L566.3 118.7 L563.3 116.9 L560.7 128.7 L557.5 141.1 L555.5 140.4 L552.4 133.6 L549.1 122.2 L546.7 128.5 L544.3 135.6 L542.0 134.9 L540.3 123.9 L537.0 121.1 L535.1 141.3 L531.9 128.7 L530.1 136.9 L527.7 133.6 L525.3 133.8 L522.1 114.8 L518.9 118.7 L515.7 127.5 L512.9 135.6 L510.5 142.6 L507.0 122.3 L505.4 134.7 L503.4 113.6 L501.1 114.8 L498.3 130.5 L495.4 117.9 L493.4 141.6 L491.1 121.4 L487.9 120.3 L486.2 131.4 L483.9 126.7 L482.3 125.2 L479.4 130.8 L476.3 133.9 L474.5 127.3 L473.0 113.5 L470.5 120.8 L468.5 118.1 L465.5 121.8 L463.6 132.1 L461.4 132.1 L458.7 128.4 L456.4 119.0 L454.7 129.7 L453.0 115.6 L450.7 140.0 L449.0 127.9 L447.4 138.4 L444.9 142.8 L443.1 129.0 L441.0 135.8 L439.3 114.9 L436.2 134.5 L432.8 123.8 L429.8 142.5 L427.8 136.7 L425.2 138.6 L423.5 129.7 L421.2 121.9 L419.1 138.9 L415.9 120.0 L414.2 139.7 L411.0 122.1 L408.6 134.5 L405.1 138.3 L403.2 119.6 L400.9 142.6 L397.8 139.9 L396.0 139.8 L393.7 122.9 L391.9 135.3 L389.7 135.3 L386.5 134.3 L384.7 135.7 L382.6 139.4 L381.0 123.7 L377.7 134.3 L375.7 118.6 L372.5 129.7 L369.1 116.0 L367.5 115.6 L365.1 142.2 L362.3 121.7 L359.8 133.0 L356.9 119.8 L355.3 125.9 L353.5 132.7 L350.2 115.7 L348.3 120.0 L345.9 128.1 L342.8 141.3 L340.4 116.2 L337.8 139.0 L334.3 137.0 L331.4 119.3 L329.5 130.1 L327.3 132.5 L323.9 133.3 L320.9 138.8 L318.5 135.3 L315.3 141.3 L313.3 134.7 L310.7 133.9 L307.3 119.1 L304.7 117.4 L303.0 118.1 L301.1 115.7 L299.5 131.4 L297.0 135.2 L294.2 134.2 L292.2 142.6 L290.3 115.3 L287.9 123.3 L285.2 123.7 L282.4 124.7 L279.5 134.2 L276.5 134.7 L274.3 128.0 L272.6 128.9 L270.7 119.7 L268.3 121.8 L266.2 131.1 L263.0 127.2 L260.9 121.6 L258.5 125.7 L256.5 124.3 L253.9 133.1 L252.2 124.8 L249.0 140.6 L246.2 142.8 L242.8 125.1 L240.9 122.7 L237.8 129.8 L236.0 126.7 L233.1 122.0 L230.8 121.3 L228.2 114.2 L225.5 133.8 L223.4 133.0 L221.0 114.4 L218.6 115.0 L216.7 117.3 L213.4 140.3 L210.9 122.2 L208.0 130.0 L203.1 123.2 L201.7 127.7 L199.8 130.0 L198.4 118.2 L196.6 137.7 L194.6 125.5 L193.5 135.6 L191.8 126.0 L190.7 127.7 L189.4 135.1 L187.9 107.5 L186.8 112.0 L185.1 115.3 L183.4 127.7 L181.4 121.0 L180.5 135.1 L179.4 118.7 L178.3 134.5 L176.8 93.9 L174.9 112.0 L173.5 121.5 L172.1 122.1 L170.4 128.9 L169.4 141.3 L168.2 132.8 L167.0 129.4 L164.8 130.6 L163.1 132.2 L162.0 94.5 L160.6 109.7 L159.5 105.2 L158.4 110.8 L156.3 104.6 L155.2 114.2 L154.1 118.7 L152.4 130.0 L150.7 86.0 L149.6 112.0 L148.7 121.0 L147.3 113.1 L146.2 118.7 L144.5 98.4 L142.8 108.6 L141.5 108.0 L140.3 114.2 L139.4 97.9 L138.9 112.0 L137.4 119.9 L135.5 97.9 L134.4 131.1 L133.2 135.6 L132.1 134.5 L130.4 97.3 L129.5 130.0 L128.2 99.6 L126.5 107.5 L125.4 114.8 L124.2 108.6 L123.1 121.5 L121.6 114.2 L120.5 105.2 L119.4 121.0 L117.8 89.4 L116.7 87.7 L115.5 108.6 L114.4 114.8 L113.5 108.6 L112.6 119.9 L111.5 149.7 L110.4 128.9 L109.4 153.1 L107.9 128.9 L106.5 131.7 L105.9 123.2 L104.5 86.0 L103.2 131.1 L101.7 141.3 L100.0 137.9 L99.2 123.2 L98.0 119.9 L96.5 136.8 L95.2 119.9 L93.3 110.8 L91.5 127.2 L89.0 109.7 L86.8 118.7 L85.4 135.1 L83.9 127.7 L82.3 138.1 L80.6 134.5 L79.4 140.1 L78.3 137.9 L77.2 140.7 L74.9 136.8 L73.5 88.9 L72.1 97.3 L70.1 106.3 L69.2 128.9 L67.6 118.7 L66.5 130.9 L64.5 113.1 L63.3 124.4 L61.4 113.1 L59.7 117.6 L58.4 127.2 L56.9 109.1 L55.8 114.2 L54.1 123.2 L52.4 128.9 L51.3 125.5 L50.1 129.4 L48.5 109.7 L47.3 89.4 L46.2 87.2 L44.5 90.6 L43.4 98.4 L41.2 89.4 L40.3 108.8 L38.9 88.3 L37.4 92.2 L36.1 87.2 L33.6 90.6 L32.1 97.3 L30.6 90.6 L29.5 93.9 L27.6 90.6 L25.4 88.3 L24.2 92.8 L22.5 101.0 L20.8 95.6 L18.6 90.6 L17.1 93.0 L15.2 87.2 L14.1 84.9 L12.4 86.6 L10.1 91.1 L7.9 90.0 L6.2 93.9 L3.4 84.9 L1.1 80.4 L0.0 79.1 Z" fill="#00ff00"/><path d="M0 235.5 L0.0 234.9 L1.1 233.6 L3.4 229.1 L6.2 220.1 L7.9 224.0 L10.1 222.9 L12.4 227.4 L14.1 229.1 L15.2 226.8 L17.1 221.0 L18.6 223.4 L20.8 218.4 L22.5 213.0 L24.2 221.2 L25.4 225.7 L27.6 223.4 L29.5 220.1 L30.6 223.4 L32.1 216.7 L33.6 223.4 L36.1 226.8 L37.4 221.8 L38.9 225.7 L40.3 205.2 L41.2 224.6 L43.4 215.6 L44.5 223.4 L46.2 226.8 L47.3 224.6 L48.5 204.3 L50.1 184.6 L51.3 188.5 L52.4 185.1 L54.1 190.8 L55.8 199.8 L56.9 204.9 L58.4 186.8 L59.7 196.4 L61.4 200.9 L63.3 189.6 L64.5 200.9 L66.5 183.1 L67.6 195.3 L69.2 185.1 L70.1 207.7 L72.1 216.7 L73.5 225.1 L74.9 177.2 L77.2 173.3 L78.3 176.1 L79.4 173.9 L80.6 179.5 L82.3 175.9 L83.9 186.3 L85.4 178.9 L86.8 195.3 L89.0 204.3 L91.5 186.8 L93.3 203.2 L95.2 194.1 L96.5 177.2 L98.0 194.1 L99.2 190.8 L100.0 176.1 L101.7 172.7 L103.2 182.9 L104.5 228.0 L105.9 190.8 L106.5 182.3 L107.9 185.1 L109.4 160.9 L110.4 185.1 L111.5 164.3 L112.6 194.1 L113.5 205.4 L114.4 199.2 L115.5 205.4 L116.7 226.3 L117.8 224.6 L119.4 193.0 L120.5 208.8 L121.6 199.8 L123.1 192.5 L124.2 205.4 L125.4 199.2 L126.5 206.5 L128.2 214.4 L129.5 184.0 L130.4 216.7 L132.1 179.5 L133.2 178.4 L134.4 182.9 L135.5 216.1 L137.4 194.1 L138.9 202.0 L139.4 216.1 L140.3 199.8 L141.5 206.0 L142.8 205.4 L144.5 215.6 L146.2 195.3 L147.3 200.9 L148.7 193.0 L149.6 202.0 L150.7 228.0 L152.4 184.0 L154.1 195.3 L155.2 199.8 L156.3 209.4 L158.4 203.2 L159.5 208.8 L160.6 204.3 L162.0 219.5 L163.1 181.8 L164.8 183.4 L167.0 184.6 L168.2 181.2 L169.4 172.7 L170.4 185.1 L172.1 191.9 L173.5 192.5 L174.9 202.0 L176.8 220.1 L178.3 179.5 L179.4 195.3 L180.5 178.9 L181.4 193.0 L183.4 186.3 L185.1 198.7 L186.8 202.0 L187.9 206.5 L189.4 178.9 L190.7 186.3 L191.8 188.0 L193.5 178.4 L194.6 188.5 L196.6 176.3 L198.4 195.8 L199.8 184.0 L201.7 186.3 L203.1 190.8 L208.0 184.0 L210.9 191.8 L213.4 173.7 L216.7 196.7 L218.6 199.0 L221.0 199.6 L223.4 181.0 L225.5 180.2 L228.2 199.8 L230.8 192.7 L233.1 192.0 L236.0 187.3 L237.8 184.2 L240.9 191.3 L242.8 188.9 L246.2 171.2 L249.0 173.4 L252.2 189.2 L253.9 180.9 L256.5 189.7 L258.5 188.3 L260.9 192.4 L263.0 186.8 L266.2 182.9 L268.3 192.2 L270.7 194.3 L272.6 185.1 L274.3 186.0 L276.5 179.3 L279.5 179.8 L282.4 189.3 L285.2 190.3 L287.9 190.7 L290.3 198.7 L292.2 171.4 L294.2 179.8 L297.0 178.8 L299.5 182.6 L301.1 198.3 L303.0 195.9 L304.7 196.6 L307.3 194.9 L310.7 180.1 L313.3 179.3 L315.3 172.7 L318.5 178.7 L320.9 175.2 L323.9 180.7 L327.3 181.5 L329.5 183.9 L331.4 194.7 L334.3 177.0 L337.8 175.0 L340.4 197.8 L342.8 172.7 L345.9 185.9 L348.3 194.0 L350.2 198.3 L353.5 181.3 L355.3 188.1 L356.9 194.2 L359.8 181.0 L362.3 192.3 L365.1 171.8 L367.5 198.4 L369.1 198.0 L372.5 184.3 L375.7 195.4 L377.7 179.7 L381.0 190.3 L382.6 174.6 L384.7 178.3 L386.5 179.7 L389.7 178.7 L391.9 178.7 L393.7 191.1 L396.0 174.2 L397.8 174.1 L400.9 171.4 L403.2 194.4 L405.1 175.7 L408.6 179.5 L411.0 191.9 L414.2 174.3 L415.9 194.0 L419.1 175.1 L421.2 192.1 L423.5 184.3 L425.2 175.4 L427.8 177.3 L429.8 171.5 L432.8 190.2 L436.2 179.5 L439.3 199.1 L441.0 178.2 L443.1 185.0 L444.9 171.2 L447.4 175.6 L449.0 186.1 L450.7 174.0 L453.0 198.4 L454.7 184.3 L456.4 195.0 L458.7 185.6 L461.4 181.9 L463.6 181.9 L465.5 192.2 L468.5 195.9 L470.5 193.2 L473.0 200.5 L474.5 186.7 L476.3 180.1 L479.4 183.2 L482.3 188.8 L483.9 187.3 L486.2 182.6 L487.9 193.7 L491.1 192.6 L493.4 172.4 L495.4 196.1 L498.3 183.5 L501.1 199.2 L503.4 200.4 L505.4 179.3 L507.0 191.7 L510.5 171.4 L512.9 178.4 L515.7 186.5 L518.9 195.3 L522.1 199.2 L525.3 180.2 L527.7 180.4 L530.1 177.1 L531.9 185.3 L535.1 172.7 L537.0 192.9 L540.3 190.1 L542.0 179.1 L544.3 178.4 L546.7 185.5 L549.1 191.8 L552.4 180.4 L555.5 173.6 L557.5 172.9 L560.7 185.3 L563.3 197.1 L566.3 195.3 L568.9 196.7 L570.6 182.2 L573.0 180.3 L576.1 171.0 L577.8 181.6 L580.4 181.0 L583.0 183.8 L586.3 186.9 L588.8 179.8 L590.5 187.5 L592.2 196.4 L593.7 194.2 L595.7 185.0 L598.3 175.8 L600.8 173.8 L603.1 178.2 L605.7 181.8 L607.7 172.4 L610.7 196.1 L613.3 170.6 L614.9 191.4 L617.9 199.3 L620.9 183.3 L623.9 184.0 L627.2 190.1 L629.9 199.0 L632.5 187.9 L636.0 172.1 L637.7 199.3 L639.5 194.7 L642.4 184.2 L646.0 177.2 L648.3 175.0 L650.2 179.5 L651.1 178.4 L652.2 173.9 L653.7 169.4 L654.8 172.7 L655.9 171.6 L657.0 179.5 L658.4 193.6 L659.7 185.1 L661.2 160.9 L662.3 179.5 L663.5 197.5 L664.4 172.7 L665.4 185.1 L666.5 203.2 L667.6 181.8 L668.5 179.5 L669.9 163.7 L671.0 173.9 L672.1 186.8 L673.3 167.7 L674.4 174.4 L676.0 160.9 L677.3 173.9 L678.7 191.3 L680.4 171.6 L682.1 168.2 L684.3 164.3 L686.0 171.6 L688.8 167.7 L691.1 172.7 L693.9 166.5 L697.3 169.9 L700.1 167.7 L701.8 169.4 L703.2 164.9 L705.2 173.9 L706.8 168.2 L708.5 174.4 L710.0 162.6 L711.4 174.4 L713.0 170.5 L714.5 164.3 L716.4 175.0 L719.2 167.1 L721.5 167.7 L723.5 164.9 L724.9 168.2 L726.2 173.3 L727.4 166.0 L728.8 170.5 L730.5 169.4 L732.8 164.3 L734.5 181.8 L736.1 167.1 L737.5 166.0 L738.6 171.6 L740.1 168.2 L741.5 175.0 L742.9 168.2 L744.6 167.7 L746.0 165.4 L746.1 166.0 L747.7 168.2 L749.2 171.6 L750.5 167.1 L751.1 172.2 L752.4 161.7 L754.1 170.5 L755.6 168.8 L757.3 171.0 L759.5 174.4 L761.5 168.2 L763.5 178.4 L764.9 171.6 L766.3 161.7 L768.0 167.1 L769.1 171.6 L770.2 178.9 L772.3 164.0 L773.6 169.4 L775.1 166.5 L776.4 174.4 L777.8 169.4 L778.9 169.4 L780.4 174.4 L781.5 167.7 L783.2 174.4 L784.9 167.1 L786.3 161.2 L787.7 169.4 L789.0 176.1 L790.5 177.2 L791.6 186.3 L792.4 194.1 L793.3 190.2 L794.2 204.3 L795.0 214.4 L796.5 215.0 L797.8 213.9 L799.0 216.7 L800.1 212.2 L801.2 214.4 L802.3 218.4 L803.7 221.8 L805.7 221.8 L807.4 215.0 L809.1 216.7 L810.8 218.4 L812.5 217.8 L813.6 221.8 L815.3 218.4 L816.8 215.8 L818.1 220.1 L820.0 218.4 L821.5 221.8 L822.6 221.2 L823.7 223.4 L825.4 222.3 L827.1 224.6 L828.0 223.4 L829.2 225.7 L829.9 223.4 L830.7 225.1 L831.6 224.6 L833.3 228.2 L834.8 227.4 L836.1 217.2 L837.5 220.6 L839.0 221.8 L840.6 221.2 L842.3 222.1 L844.0 223.4 L846.1 224.6 L851.9 225.9 L852 235.5 L851.9 245.1 L846.1 246.4 L844.0 247.6 L842.3 248.9 L840.6 249.8 L839.0 249.2 L837.5 250.4 L836.1 253.8 L834.8 243.6 L833.3 242.8 L831.6 246.4 L830.7 245.9 L829.9 247.6 L829.2 245.3 L828.0 247.6 L827.1 246.4 L825.4 248.7 L823.7 247.6 L822.6 249.8 L821.5 249.2 L820.0 252.6 L818.1 250.9 L816.8 255.2 L815.3 252.6 L813.6 249.2 L812.5 253.2 L810.8 252.6 L809.1 254.3 L807.4 256.0 L805.7 249.2 L803.7 249.2 L802.3 252.6 L801.2 256.6 L800.1 258.8 L799.0 254.3 L797.8 257.1 L796.5 256.0 L795.0 256.6 L794.2 266.7 L793.3 280.8 L792.4 276.9 L791.6 284.7 L790.5 293.8 L789.0 294.9 L787.7 301.6 L786.3 309.8 L784.9 303.9 L783.2 296.6 L781.5 303.3 L780.4 296.6 L778.9 301.6 L777.8 301.6 L776.4 296.6 L775.1 304.5 L773.6 301.6 L772.3 307.0 L770.2 292.1 L769.1 299.4 L768.0 303.9 L766.3 309.3 L764.9 299.4 L763.5 292.6 L761.5 302.8 L759.5 296.6 L757.3 300.0 L755.6 302.2 L754.1 300.5 L752.4 309.3 L751.1 298.8 L750.5 303.9 L749.2 299.4 L747.7 302.8 L746.1 305.0 L746.0 305.6 L744.6 303.3 L742.9 302.8 L741.5 296.0 L740.1 302.8 L738.6 299.4 L737.5 305.0 L736.1 303.9 L734.5 289.2 L732.8 306.7 L730.5 301.6 L728.8 300.5 L727.4 305.0 L726.2 297.7 L724.9 302.8 L723.5 306.1 L721.5 303.3 L719.2 303.9 L716.4 296.0 L714.5 306.7 L713.0 300.5 L711.4 296.6 L710.0 308.4 L708.5 296.6 L706.8 302.8 L705.2 297.1 L703.2 306.1 L701.8 301.6 L700.1 303.3 L697.3 301.1 L693.9 304.5 L691.1 298.3 L688.8 303.3 L686.0 299.4 L684.3 306.7 L682.1 302.8 L680.4 299.4 L678.7 279.7 L677.3 297.1 L676.0 310.1 L674.4 296.6 L673.3 303.3 L672.1 284.2 L671.0 297.1 L669.9 307.3 L668.5 291.5 L667.6 289.2 L666.5 267.8 L665.4 285.9 L664.4 298.3 L663.5 273.5 L662.3 291.5 L661.2 310.1 L659.7 285.9 L658.4 277.4 L657.0 291.5 L655.9 299.4 L654.8 298.3 L653.7 301.6 L652.2 297.1 L651.1 292.6 L650.2 291.5 L648.3 296.0 L646.0 293.8 L642.4 286.8 L639.5 276.3 L637.7 271.7 L636.0 298.9 L632.5 283.1 L629.9 272.0 L627.2 280.9 L623.9 287.0 L620.9 287.7 L617.9 271.7 L614.9 279.6 L613.3 300.4 L610.7 274.9 L607.7 298.6 L605.7 289.2 L603.1 292.8 L600.8 297.2 L598.3 295.2 L595.7 286.0 L593.7 276.8 L592.2 274.6 L590.5 283.5 L588.8 291.2 L586.3 284.1 L583.0 287.2 L580.4 290.0 L577.8 289.4 L576.1 300.0 L573.0 290.7 L570.6 288.8 L568.9 274.3 L566.3 275.7 L563.3 273.9 L560.7 285.7 L557.5 298.1 L555.5 297.4 L552.4 290.6 L549.1 279.2 L546.7 285.5 L544.3 292.6 L542.0 291.9 L540.3 280.9 L537.0 278.1 L535.1 298.3 L531.9 285.7 L530.1 293.9 L527.7 290.6 L525.3 290.8 L522.1 271.8 L518.9 275.7 L515.7 284.5 L512.9 292.6 L510.5 299.6 L507.0 279.3 L505.4 291.7 L503.4 270.6 L501.1 271.8 L498.3 287.5 L495.4 274.9 L493.4 298.6 L491.1 278.4 L487.9 277.3 L486.2 288.4 L483.9 283.7 L482.3 282.2 L479.4 287.8 L476.3 290.9 L474.5 284.3 L473.0 270.5 L470.5 277.8 L468.5 275.1 L465.5 278.8 L463.6 289.1 L461.4 289.1 L458.7 285.4 L456.4 276.0 L454.7 286.7 L453.0 272.6 L450.7 297.0 L449.0 284.9 L447.4 295.4 L444.9 299.8 L443.1 286.0 L441.0 292.8 L439.3 271.9 L436.2 291.5 L432.8 280.8 L429.8 299.5 L427.8 293.7 L425.2 295.6 L423.5 286.7 L421.2 278.9 L419.1 295.9 L415.9 277.0 L414.2 296.7 L411.0 279.1 L408.6 291.5 L405.1 295.3 L403.2 276.6 L400.9 299.6 L397.8 296.9 L396.0 296.8 L393.7 279.9 L391.9 292.3 L389.7 292.3 L386.5 291.3 L384.7 292.7 L382.6 296.4 L381.0 280.7 L377.7 291.3 L375.7 275.6 L372.5 286.7 L369.1 273.0 L367.5 272.6 L365.1 299.2 L362.3 278.7 L359.8 290.0 L356.9 276.8 L355.3 282.9 L353.5 289.7 L350.2 272.7 L348.3 277.0 L345.9 285.1 L342.8 298.3 L340.4 273.2 L337.8 296.0 L334.3 294.0 L331.4 276.3 L329.5 287.1 L327.3 289.5 L323.9 290.3 L320.9 295.8 L318.5 292.3 L315.3 298.3 L313.3 291.7 L310.7 290.9 L307.3 276.1 L304.7 274.4 L303.0 275.1 L301.1 272.7 L299.5 288.4 L297.0 292.2 L294.2 291.2 L292.2 299.6 L290.3 272.3 L287.9 280.3 L285.2 280.7 L282.4 281.7 L279.5 291.2 L276.5 291.7 L274.3 285.0 L272.6 285.9 L270.7 276.7 L268.3 278.8 L266.2 288.1 L263.0 284.2 L260.9 278.6 L258.5 282.7 L256.5 281.3 L253.9 290.1 L252.2 281.8 L249.0 297.6 L246.2 299.8 L242.8 282.1 L240.9 279.7 L237.8 286.8 L236.0 283.7 L233.1 279.0 L230.8 278.3 L228.2 271.2 L225.5 290.8 L223.4 290.0 L221.0 271.4 L218.6 272.0 L216.7 274.3 L213.4 297.3 L210.9 279.2 L208.0 287.0 L203.1 280.2 L201.7 284.7 L199.8 287.0 L198.4 275.2 L196.6 294.7 L194.6 282.5 L193.5 292.6 L191.8 283.0 L190.7 284.7 L189.4 292.1 L187.9 264.5 L186.8 269.0 L185.1 272.3 L183.4 284.7 L181.4 278.0 L180.5 292.1 L179.4 275.7 L178.3 291.5 L176.8 250.9 L174.9 269.0 L173.5 278.5 L172.1 279.1 L170.4 285.9 L169.4 298.3 L168.2 289.8 L167.0 286.4 L164.8 287.6 L163.1 289.2 L162.0 251.5 L160.6 266.7 L159.5 262.2 L158.4 267.8 L156.3 261.6 L155.2 271.2 L154.1 275.7 L152.4 287.0 L150.7 243.0 L149.6 269.0 L148.7 278.0 L147.3 270.1 L146.2 275.7 L144.5 255.4 L142.8 265.6 L141.5 265.0 L140.3 271.2 L139.4 254.9 L138.9 269.0 L137.4 276.9 L135.5 254.9 L134.4 288.1 L133.2 292.6 L132.1 291.5 L130.4 254.3 L129.5 287.0 L128.2 256.6 L126.5 264.5 L125.4 271.8 L124.2 265.6 L123.1 278.5 L121.6 271.2 L120.5 262.2 L119.4 278.0 L117.8 246.4 L116.7 244.7 L115.5 265.6 L114.4 271.8 L113.5 265.6 L112.6 276.9 L111.5 306.7 L110.4 285.9 L109.4 310.1 L107.9 285.9 L106.5 288.7 L105.9 280.2 L104.5 243.0 L103.2 288.1 L101.7 298.3 L100.0 294.9 L99.2 280.2 L98.0 276.9 L96.5 293.8 L95.2 276.9 L93.3 267.8 L91.5 284.2 L89.0 266.7 L86.8 275.7 L85.4 292.1 L83.9 284.7 L82.3 295.1 L80.6 291.5 L79.4 297.1 L78.3 294.9 L77.2 297.7 L74.9 293.8 L73.5 245.9 L72.1 254.3 L70.1 263.3 L69.2 285.9 L67.6 275.7 L66.5 287.9 L64.5 270.1 L63.3 281.4 L61.4 270.1 L59.7 274.6 L58.4 284.2 L56.9 266.1 L55.8 271.2 L54.1 280.2 L52.4 285.9 L51.3 282.5 L50.1 286.4 L48.5 266.7 L47.3 246.4 L46.2 244.2 L44.5 247.6 L43.4 255.4 L41.2 246.4 L40.3 265.8 L38.9 245.3 L37.4 249.2 L36.1 244.2 L33.6 247.6 L32.1 254.3 L30.6 247.6 L29.5 250.9 L27.6 247.6 L25.4 245.3 L24.2 249.8 L22.5 258.0 L20.8 252.6 L18.6 247.6 L17.1 250.0 L15.2 244.2 L14.1 241.9 L12.4 243.6 L10.1 248.1 L7.9 247.0 L6.2 250.9 L3.4 241.9 L1.1 237.4 L0.0 236.1 Z" fill="#00ff00"/><rect x="0" y="156" width="852" height="3" fill="#000"/><rect x="0" y="156.5" width="852" height="2" fill="#fff"/><line x1="0.5" y1="0" x2="0.5" y2="315" stroke="#cfcf26" stroke-width="1.1" stroke-dasharray="3 1"/><text x="8" y="17" font-family="Liberation Sans, sans-serif" font-size="12" fill="#fff">Channel 0</text><text x="8" y="174.7" font-family="Liberation Sans, sans-serif" font-size="12" fill="#fff">Channel 1</text></svg>
  <svg class="abs" style="left:262px;top:143px" width="16" height="21" viewBox="0 0 16 21"><path d="M0.5 0.5H15.5V10.5L8 20L0.5 10.5Z" fill="#ff4500" stroke="#140400" stroke-width="1"/></svg><svg class="abs" style="left:262px;top:522px" width="16" height="22" viewBox="0 0 16 22"><path d="M0.5 20.2V10.2L8 3.3L15.5 10.2V20.2Z" fill="#ff4500" stroke="#140400" stroke-width="1"/></svg><svg class="abs" style="left:603px;top:143px" width="16" height="21" viewBox="0 0 16 21"><path d="M0.5 0.5H15.5V10.5L8 20L0.5 10.5Z" fill="#ff4500" stroke="#140400" stroke-width="1"/></svg><svg class="abs" style="left:603px;top:522px" width="16" height="22" viewBox="0 0 16 22"><path d="M0.5 20.2V10.2L8 3.3L15.5 10.2V20.2Z" fill="#ff4500" stroke="#140400" stroke-width="1"/></svg>
  <div class="abs" style="left:14px;top:544px;width:852px;height:17px;background:#e6e6e6;border:1px solid #bcbcbc"></div>
  <div class="abs" style="left:14px;top:577px;width:852px;height:87px;border:1px solid #dcdcdc"></div>
  <div class="t" style="left:20px;top:570.3px;background:#f0f0f0;padding:0 2px">选择区域</div>
  <div class="t" style="left:33px;top:597.5px">开始位置</div>
  <div class="inp" style="left:103px;top:593px">77.700</div>
  <div class="t" style="left:225.7px;top:597.5px">秒</div>
  <div class="t" style="left:318px;top:597.5px">结束位置</div>
  <div class="inp" style="left:388px;top:593px">181.300</div>
  <div class="t" style="left:511.7px;top:597.5px">秒</div>
  <div class="t" style="left:613px;top:597.5px">持续长度</div>
  <div class="inp" style="left:684px;top:593px">103.600</div>
  <div class="t" style="left:806.7px;top:597.5px">秒</div>
  <div class="t" style="left:33px;top:628.5px">播放位置</div>
  <div class="inp" style="left:103px;top:624px">0.000</div>
  <div class="t" style="left:225.7px;top:628.5px">秒</div>
  <div class="t" style="left:318px;top:628.5px">总长度</div>
  <div class="t" style="left:399px;top:627.7px;width:100px;text-align:right;font-size:13px;letter-spacing:-0.3px">259.000</div>
  <div class="t" style="left:511.7px;top:628.5px">秒</div>
  <div class="abs" style="left:0;top:694px;width:879px;height:1px;background:#d9d9d9"></div>
  <svg class="abs" style="left:868px;top:700px" width="13" height="13" viewBox="0 0 13 13"><g fill="#b8b8b8"><rect x="9" y="3" width="2" height="2"/><rect x="9" y="7" width="2" height="2"/><rect x="5" y="7" width="2" height="2"/><rect x="9" y="11" width="2" height="2"/><rect x="5" y="11" width="2" height="2"/><rect x="1" y="11" width="2" height="2"/></g></svg>

</div></div>
<div id="dlg" style="position:absolute;left:486px;top:190px;width:448px;height:339px;background:#f0f0f0;border-radius:7px;box-shadow:0 0 0 1px rgba(0,0,0,.25),0 16px 52px rgba(0,0,0,.40);overflow:hidden">
  <div class="abs" style="left:0;top:0;width:448px;height:30px;background:#eff3fa"></div>
  <svg class="abs" style="left:8.5px;top:6.5px" width="16" height="16" viewBox="0 0 24 24"><path d="M6.2 4.6H13.8M3.7 12.3H11.1" stroke="#9a9a9a" stroke-width="1.1"/><path d="M0.5 8.4H8.4M7.4 18.4H15.1" stroke="#ff9a2e" stroke-width="1.1"/><circle cx="18.4" cy="5.6" r="2" fill="#0a7af7"/><path d="M10.8 9.6C12 8 13.5 7.9 16 8.3L14.6 13.4M16.3 8.6L19.2 9.6L22.6 7.4M14.6 13.4L12.4 15.5L8 15.2M14.8 13.2L17.4 15.2L19.7 19.6" stroke="#0a7af7" stroke-width="2.2" stroke-linecap="round" stroke-linejoin="round" fill="none"/></svg>
  <div class="t" style="left:30px;top:6px">调节播放速度</div>
  <svg class="abs" style="left:427px;top:8px" width="12" height="12" viewBox="0 0 12 12"><path d="M1 1L11 11M11 1L1 11" stroke="#1a1a1a" stroke-width="1.1" fill="none"/></svg>
  <div class="t" style="left:35px;top:63px">加快或减慢播放速度</div>
  <div class="t" style="left:35px;top:135px">50%</div>
  <div class="t" style="left:152px;top:135px">100%</div>
  <div class="t" style="left:379px;top:135px">200%</div>
  <div class="abs" style="left:40px;top:163px;width:368px;height:4px;background:#e7eaea;border:1px solid #d6d6d6"></div>
  <svg class="abs" style="left:40px;top:177px" width="370" height="4" viewBox="0 0 370 4"><path d="M5.8 0V4M17.7 0V4M29.6 0V4M41.5 0V4M53.4 0V4M65.3 0V4M77.2 0V4M89.1 0V4M101.0 0V4M112.9 0V4M124.8 0V4M136.7 0V4M148.6 0V4M160.5 0V4M172.4 0V4M184.3 0V4M196.2 0V4M208.1 0V4M220.0 0V4M231.9 0V4M243.8 0V4M255.7 0V4M267.6 0V4M279.5 0V4M291.4 0V4M303.3 0V4M315.2 0V4M327.1 0V4M339.0 0V4M350.9 0V4M362.8 0V4" stroke="#c4c4c4" stroke-width="1" fill="none"/></svg>
  <svg class="abs" style="left:247px;top:157px" width="11" height="20" viewBox="0 0 11 20"><path d="M0 0H11V14L5.5 19.5L0 14Z" fill="#0a78d7"/></svg>
  <div class="t" style="left:35px;top:205px;font-weight:bold">新的播放速度是原始的 1.37 倍</div>
  <div class="abs" style="left:85px;top:273px;width:103px;height:40px;border:1px solid #0078d4;border-radius:4px;background:#fdfdfd;text-align:center;line-height:38px;font-size:12px;padding-right:3px;letter-spacing:-0.15px">确定(<u>O</u>)</div>
  <div class="abs" style="left:260px;top:273px;width:103px;height:40px;border:1px solid #d0d0d0;border-radius:4px;background:#fdfdfd;text-align:center;line-height:38px;font-size:12px;padding-right:3px;letter-spacing:-0.15px">取消(<u>C</u>)</div>
  <div class="abs" style="left:0;top:0;width:448px;height:339px;border-radius:7px;box-shadow:inset 0 0 0 1px rgba(255,255,255,.35);pointer-events:none"></div>
</div>

</body>
</html>
